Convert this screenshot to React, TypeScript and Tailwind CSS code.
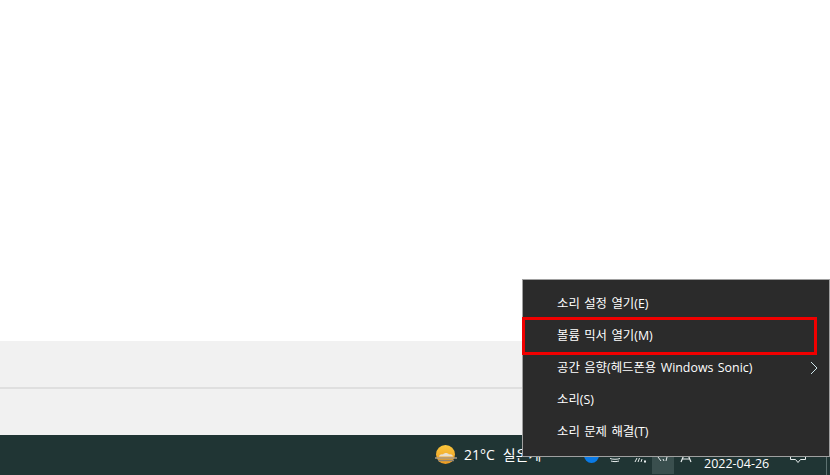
const items = [
  { label: "소리 설정 열기(E)" },
  { label: "볼륨 믹서 열기(M)" },
  { label: "공간 음향(헤드폰용 Windows Sonic)", sub: true },
  { label: "소리(S)" },
  { label: "소리 문제 해결(T)" },
];

const font = "font-['Open_Sans','Noto_Sans_CJK_KR',sans-serif]";

function Weather() {
  return (
    <svg width="24" height="22" viewBox="0 0 24 22" className="shrink-0">
      <defs>
        <linearGradient id="sun" x1="0" y1="0" x2="0" y2="1">
          <stop offset="0" stopColor="#fbc73c" />
          <stop offset="1" stopColor="#ec9a22" />
        </linearGradient>
      </defs>
      <circle cx="11.500" cy="10.500" r="9.500" fill="url(#sun)" />
      <path d="M5 12.500c.5-2 2.500-2.500 4-2 1-2 5-2 6 0 2-.5 3.500.5 4 2z" fill="#e9e0cf" />
      <path d="M1 14h22" stroke="#a99a84" strokeWidth="1.500" />
      <path d="M4 16.500h16" stroke="#8f8474" strokeWidth="1.500" />
    </svg>
  );
}

function TrayIcon({ className, children }: { className: string; children: React.ReactNode }) {
  return (
    <svg viewBox="0 0 16 16" width="16" height="16" className={`shrink-0 ${className}`} fill="none" stroke="#e8eeee" strokeWidth="1">
      {children}
    </svg>
  );
}

export default function App() {
  return (
    <div className={`relative flex h-[475px] w-[830px] flex-col overflow-hidden bg-white ${font}`}>
      <div className="h-[341px] shrink-0 bg-white" />
      <div className="h-[48px] shrink-0 border-b-2 border-[#dfdfdf] bg-[#f1f1f1]" />
      <div className="h-[46px] shrink-0 bg-[#f1f1f1]" />
      <div className="flex h-[40px] shrink-0 items-center bg-[#203534] text-white">
        <div className="ml-[434px] flex w-[126px] shrink-0 items-center">
          <Weather />
          <span className="ml-[6px] text-[14px] leading-[20px]">21°C</span>
          <span className="ml-[8px] text-[14px] leading-[20px] whitespace-nowrap">실온계</span>
        </div>
        <svg width="13" height="16" viewBox="0 0 13 16" className="shrink-0" fill="none" stroke="#dfe6e6" strokeWidth="1">
          <path d="M1 5l5 5 5-5" />
        </svg>
        <div className="ml-[11px] h-[16px] w-[15px] shrink-0 rounded-full bg-[#0a7ae6]" />
        <TrayIcon className="ml-[8px]">
          <path d="M3 11.500c2 1 8 1 10 0M4 14c2 .8 6 .8 8 0" />
        </TrayIcon>
        <TrayIcon className="ml-[9px]">
          <path d="M3 15l2-4M6 15l1.500-4M9 15l1-3" />
          <path d="M12 14.500h2" strokeWidth="2" />
        </TrayIcon>
        <div className="mb-[1px] ml-[4px] flex h-[38px] w-[22px] shrink-0 items-center justify-center self-end bg-[#3a4f4e]">
          <TrayIcon className="mt-[1px]">
            <path d="M3 9l3 4M8 11l1 2M12 9l-1 4" />
          </TrayIcon>
        </div>
        <TrayIcon className="ml-[4px]">
          <path d="M3 15l5-12 5 12M4.500 12h7" strokeWidth="1.200" />
        </TrayIcon>
        <span className="mb-[3px] ml-[10px] w-[72px] shrink-0 self-end text-[12.500px] leading-[16px] whitespace-nowrap">2022-04-26</span>
        <svg width="18" height="18" viewBox="0 0 18 18" className="ml-[13px] shrink-0" fill="none" stroke="#e8eeee" strokeWidth="1">
          <path d="M1.500 2v11.500h5l2.500 3 2.500-3h5V2" />
        </svg>
        <div className="ml-[19px] h-full w-px shrink-0 bg-[#5d7170]" />
      </div>
      <div className="absolute left-[522px] top-[279px] flex h-[178px] w-[308px] flex-col border border-[#a0a0a0] bg-[#2b2b2b] pt-[8px] text-[12.400px] text-white">
        {items.map((item) => (
          <div key={item.label} className="relative flex h-[32px] items-center pl-[34px]">
            <span className="whitespace-nowrap [word-spacing:1.200px]">{item.label}</span>
            {item.sub && (
              <svg width="10" height="14" viewBox="0 0 10 14" className="absolute right-[10px] top-[9px]">
                <path d="M2 1l6 6-6 6" fill="none" stroke="#cfe6ea" strokeWidth="1" />
              </svg>
            )}
          </div>
        ))}
      </div>
      <div className="absolute left-[522px] top-[317px] h-[38px] w-[295px] border-[3px] border-[#f00000]" />
    </div>
  );
}
